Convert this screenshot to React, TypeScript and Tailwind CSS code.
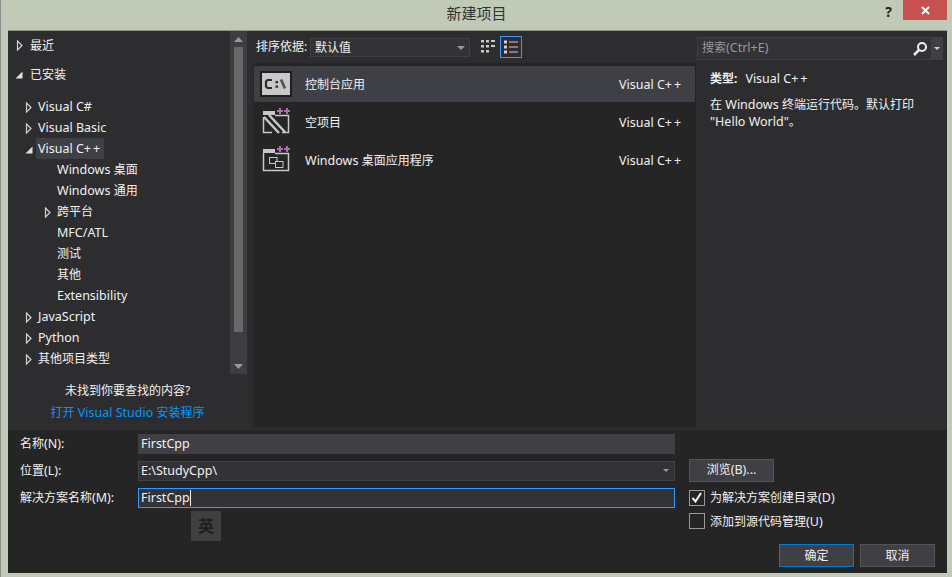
import React from "react";

const font = { fontFamily: '"Noto Sans", "Noto Sans CJK SC", sans-serif' };

function T({ children }: { children: string }) {
  const parts = children.split(/([\u4e00-\u9fff。]+|\+\+)/).filter(Boolean);
  return (
    <>
      {parts.map((p, i) =>
        p === "++" ? (
          <span key={i} className="tracking-[2px]">++</span>
        ) : /[\u4e00-\u9fff。]/.test(p) ? (
          <span key={i} className="text-[12px]">{p}</span>
        ) : (
          <React.Fragment key={i}>{p}</React.Fragment>
        )
      )}
    </>
  );
}

function Closed() {
  return (
    <svg width="8" height="11" viewBox="0 0 8 11" className="shrink-0">
      <path d="M1.500 1 L6 5.500 L1.500 10 Z" fill="none" stroke="#d0d0d0" strokeWidth="1.200" />
    </svg>
  );
}
function Open() {
  return (
    <svg width="8" height="8" viewBox="0 0 8 8" className="shrink-0">
      <path d="M7.500 0.500 V7.500 H0.500 Z" fill="#e0e0e0" />
    </svg>
  );
}

function Row({ depth, arrow, label, selected }: { depth: number; arrow?: "o" | "c"; label: string; selected?: boolean }) {
  return (
    <div className="flex h-[21px] items-center">
      <div className={depth === 1 ? "flex w-[28px] justify-end pr-[3px] shrink-0" : depth === 2 ? "flex w-[47px] justify-end pr-[3px] shrink-0" : "w-[47px] shrink-0"}>
        {arrow === "o" ? <Open /> : arrow === "c" ? <Closed /> : null}
      </div>
      <span className={selected ? "-mt-[2px] h-[21px] leading-[21px] bg-[#3f3f46] px-[2px] text-[#f1f1f1]" : "px-[2px] text-[#f1f1f1]"}><T>{label}</T></span>
    </div>
  );
}

function Tree() {
  return (
    <div className="flex-1 text-[12.5px]">
      <div className="flex h-[21px] items-center pl-[8px] mt-[4px]">
        <div className="w-[14px]"><Closed /></div>
        <span className="text-[12px] text-[#f1f1f1]">最近</span>
      </div>
      <div className="flex h-[21px] items-center pl-[7px] mt-[8px]">
        <div className="w-[15px]"><Open /></div>
        <span className="text-[12px] text-[#f1f1f1]">已安装</span>
      </div>
      <div className="mt-[12px]">
        <Row depth={1} arrow="c" label="Visual C#" />
        <Row depth={1} arrow="c" label="Visual Basic" />
        <Row depth={1} arrow="o" label="Visual C++" selected />
        <Row depth={3} label="Windows 桌面" />
        <Row depth={3} label="Windows 通用" />
        <Row depth={2} arrow="c" label="跨平台" />
        <Row depth={3} label="MFC/ATL" />
        <Row depth={3} label="测试" />
        <Row depth={3} label="其他" />
        <Row depth={3} label="Extensibility" />
        <Row depth={1} arrow="c" label="JavaScript" />
        <Row depth={1} arrow="c" label="Python" />
        <Row depth={1} arrow="c" label="其他项目类型" />
      </div>
    </div>
  );
}

function ConsoleIcon() {
  return (
    <div className="-ml-[2px] flex h-[26px] w-[32px] items-center justify-center bg-[#1e1e1e]">
      <div className="flex h-[22px] w-[28px] items-center justify-center bg-[#c8c8c8]">
        <svg width="24" height="12" viewBox="0 0 24 12">
          <path d="M8 2H3.500L2 3.500V8.500L3.500 10H8" fill="none" stroke="#2a2a2a" strokeWidth="2.200" />
          <path d="M11.500 3h2.500v2.200h-2.500zM11.500 7.500h2.500v2.200h-2.500z" fill="#2a2a2a" />
          <path d="M17 1.500L21 10.500" fill="none" stroke="#555555" strokeWidth="2.800" />
        </svg>
      </div>
    </div>
  );
}
const plus = "M15 3H21M18 0V6M22 3H28M25 0V6";
function EmptyIcon() {
  return (
    <svg width="29" height="26" viewBox="0 0 29 26" className="-mt-[2px]">
      <path d="M1 3H13V7H1Z" fill="#c8c8c8" />
      <path d="M13 7.500H26.500V24.500H20M10 24.500H1.500V9" fill="none" stroke="#c8c8c8" strokeWidth="1.500" />
      <path d="M2 9L17 25M7 7L23 24" stroke="#c8c8c8" strokeWidth="2.500" fill="none" />
      <path d={plus} stroke="#b36bb3" strokeWidth="2" fill="none" />
    </svg>
  );
}
function DesktopIcon() {
  return (
    <svg width="29" height="26" viewBox="0 0 29 26" className="-mt-[2px]">
      <path d="M1 3H13V7H1Z" fill="#c8c8c8" />
      <path d="M13 7.500H26.500V24.500H1.500V7" fill="none" stroke="#c8c8c8" strokeWidth="1.500" />
      <rect x="7.500" y="11.500" width="7.500" height="6" fill="none" stroke="#c8c8c8" />
      <rect x="13.500" y="15.500" width="7.500" height="6" fill="#252526" stroke="#c8c8c8" />
      <path d={plus} stroke="#b36bb3" strokeWidth="2" fill="none" />
    </svg>
  );
}

function Template({ icon, label, selected }: { icon: React.ReactNode; label: string; selected?: boolean }) {
  return (
    <div className={selected ? "flex h-[36px] items-center bg-[#3f3f46] text-[#f1f1f1] mb-[2px]" : "flex h-[36px] items-center text-[#f1f1f1] mb-[2px]"}>
      <div className="flex w-[51px] shrink-0 justify-start pl-[8px]">{icon}</div>
      <span className="flex-1 pt-[2px]"><T>{label}</T></span>
      <span className="w-[76px] shrink-0 pt-[2px]"><T>Visual C++</T></span>
    </div>
  );
}

function Arrow() {
  return (
    <svg width="8" height="4" viewBox="0 0 8 4" className="shrink-0">
      <path d="M0 0H8L4 4Z" fill="#999999" />
    </svg>
  );
}

export default function App() {
  return (
    <div className="flex h-[577px] w-[952px] flex-col overflow-hidden border-l border-[#8c8c8c] bg-[#c1c9b7] text-[12.5px]" style={font}>
      <div className="relative flex h-[30px] shrink-0 items-center justify-center">
        <span className="mt-[-3px] text-[15px] text-[#333333]">新建项目</span>
        <span className="absolute right-[60px] top-[1px] text-[14px] font-bold text-[#222222]">?</span>
        <div className="absolute right-[5px] top-0 flex h-[20px] w-[44px] items-center justify-center bg-[#c75050]">
          <svg width="9" height="9" viewBox="0 0 9 9"><path d="M1 1L8 8M8 1L1 8" stroke="#fff" strokeWidth="2" /></svg>
        </div>
      </div>

      <div className="ml-[7px] mr-[5px] flex h-[543px] flex-col border-t border-[#8f9488] bg-[#2d2d30]">
        <div className="flex h-[399px] shrink-0">
          {/* left */}
          <div className="flex w-[239px] shrink-0 flex-col">
            <div className="flex h-[343px]">
              <div className="w-[222px] text-[#f1f1f1]"><Tree /></div>
              <div className="flex w-[17px] flex-col items-center bg-[#3e3e42]">
                <div className="flex h-[16px] items-center justify-center">
                  <svg width="9" height="5" viewBox="0 0 9 5"><path d="M0 5H9L4.500 0Z" fill="#999999" /></svg>
                </div>
                <div className="h-[285px] w-[9px] bg-[#686868]" />
                <div className="flex-1" />
                <div className="flex h-[16px] items-center justify-center">
                  <svg width="9" height="5" viewBox="0 0 9 5"><path d="M0 0H9L4.500 5Z" fill="#999999" /></svg>
                </div>
              </div>
            </div>
            <div className="flex flex-1 flex-col items-center pt-[8px]">
              <span className="text-[12px] text-[#f1f1f1]">未找到你要查找的内容?</span>
              <span className="mt-[4px] text-[#0097fb]"><T>打开 Visual Studio 安装程序</T></span>
            </div>
          </div>

          {/* center */}
          <div className="flex w-[449px] shrink-0 flex-col pl-[6px] pb-[3px]">
            <div className="flex h-[32px] shrink-0 items-center pl-[3px]">
              <span className="w-[54px] shrink-0 text-[12px] text-[#f1f1f1]">排序依据:</span>
              <div className="mt-[1px] flex h-[19px] w-[160px] items-center justify-between border border-[#3f3f46] bg-[#333337] pl-[4px] pr-[4px] text-[#f1f1f1]">
                <span className="text-[12px]">默认值</span>
                <Arrow />
              </div>
              <svg width="14" height="16" viewBox="0 0 14 16" className="ml-[11px]">
                <path d="M0 1h3v2.500H0zM5 1h3v2.500H5zM10 1h4v2H10zM0 6h3v2.500H0zM5 6h3v2.500H5zM10 6h4v2H10zM0 11h3v2.500H0zM5 11h3v2.500H5z" fill="#c8c8c8" />
              </svg>
              <div className="ml-[5px] flex h-[22px] w-[22px] items-center justify-center border border-[#3399ff]">
                <svg width="14" height="14" viewBox="0 0 14 14">
                  <path d="M0 0.500h3v3H0zM0 5.500h3v3H0zM0 10.500h3v3H0zM5 1.500h9v1H5zM5 6.500h9v1H5zM5 11.500h9v1H5z" fill="#d0d0d0" />
                </svg>
              </div>
            </div>
            <div className="flex-1 bg-[#252526] px-[1px] pt-[3px]">
              <Template icon={<ConsoleIcon />} label="控制台应用" selected />
              <Template icon={<EmptyIcon />} label="空项目" />
              <Template icon={<DesktopIcon />} label="Windows 桌面应用程序" />
            </div>
          </div>

          {/* right */}
          <div className="flex flex-1 flex-col pl-[1px] pr-[4px] pt-[6px]">
            <div className="flex h-[23px] items-center border border-[#3f3f46] bg-[#333337] pl-[4px]">
              <span className="flex-1 text-[#999999]"><T>搜索(Ctrl+E)</T></span>
              <svg width="16" height="16" viewBox="0 0 16 16" className="mr-[3px]">
                <circle cx="10" cy="6" r="4" fill="none" stroke="#f0f0f0" strokeWidth="2" />
                <path d="M7 9L2 14" stroke="#f0f0f0" strokeWidth="2.500" />
              </svg>
              <div className="flex h-full w-[11px] items-center justify-center bg-[#3f3f46]">
                <svg width="6" height="3" viewBox="0 0 6 3"><path d="M0 0H6L3 3Z" fill="#d0d0d0" /></svg>
              </div>
            </div>
            <div className="pl-[13px] pt-[10px] text-[#f1f1f1]">
              <div><b className="text-[12px]">类型:</b><span className="ml-[8px]"><T>Visual C++</T></span></div>
              <div className="mt-[7px] leading-[17px]"><T>在 Windows 终端运行代码。默认打印</T><br />"Hello World"<span className="text-[12px]">。</span></div>
            </div>
          </div>
        </div>

        {/* bottom form */}
        <div className="relative flex flex-1 flex-col bg-[#252526] pl-[12px] text-[#f1f1f1]">
          <div className="flex h-[27px] items-center">
            <span className="w-[118px] shrink-0 pt-[2px]"><T>名称(N):</T></span>
            <div className="flex h-[20px] w-[537px] items-center bg-[#3f3f46] pl-[3px] pt-[2px]">FirstCpp</div>
          </div>
          <div className="flex h-[27px] items-center">
            <span className="w-[118px] shrink-0 pt-[2px]"><T>位置(L):</T></span>
            <div className="flex h-[20px] w-[537px] items-center justify-between border border-[#434346] bg-[#333337] pl-[2px] pr-[5px]">
              <span className="pt-[2px]">E:\StudyCpp\</span>
              <svg width="6" height="3" viewBox="0 0 6 3"><path d="M0 0H6L3 3Z" fill="#999999" /></svg>
            </div>
            <button className="ml-[14px] h-[23px] w-[85px] border border-[#555555] bg-[#3f3f46] text-[#f1f1f1]"><T>浏览(B)...</T></button>
          </div>
          <div className="flex h-[27px] items-center">
            <span className="w-[118px] shrink-0 pt-[2px]"><T>解决方案名称(M):</T></span>
            <div className="flex h-[20px] w-[537px] items-center border border-[#3399ff] bg-[#333337] pl-[2px]">
              <span className="pt-[2px]">FirstCpp</span><span className="h-[16px] w-px bg-[#f1f1f1]" />
            </div>
            <div className="ml-[14px] flex h-[16px] w-[16px] items-center justify-center border border-[#999999]">
              <svg width="12" height="11" viewBox="0 0 12 11"><path d="M1.500 6L4.500 9.500L10 1" fill="none" stroke="#f1f1f1" strokeWidth="2" /></svg>
            </div>
            <span className="ml-[5px] pt-[2px]"><T>为解决方案创建目录(D)</T></span>
          </div>
          <div className="flex h-[20px] items-center pl-[669px]">
            <div className="h-[16px] w-[16px] shrink-0 border border-[#999999]" />
            <span className="ml-[5px] whitespace-nowrap pt-[2px]"><T>添加到源代码管理(U)</T></span>
          </div>
          <div className="mt-[13px] flex justify-end gap-[6px] pr-[12px]">
            <button className="h-[23px] w-[75px] border border-[#007acc] bg-[#3f3f46] text-[12px] text-[#f1f1f1]">确定</button>
            <button className="h-[23px] w-[75px] border border-[#555555] bg-[#3f3f46] text-[12px] text-[#f1f1f1]">取消</button>
          </div>
          <div className="absolute left-[183px] top-[81px] flex h-[30px] w-[30px] items-center justify-center bg-[#404040] text-[16px] font-bold text-[#1e1e1e]">英</div>
        </div>
      </div>
    </div>
  );
}
